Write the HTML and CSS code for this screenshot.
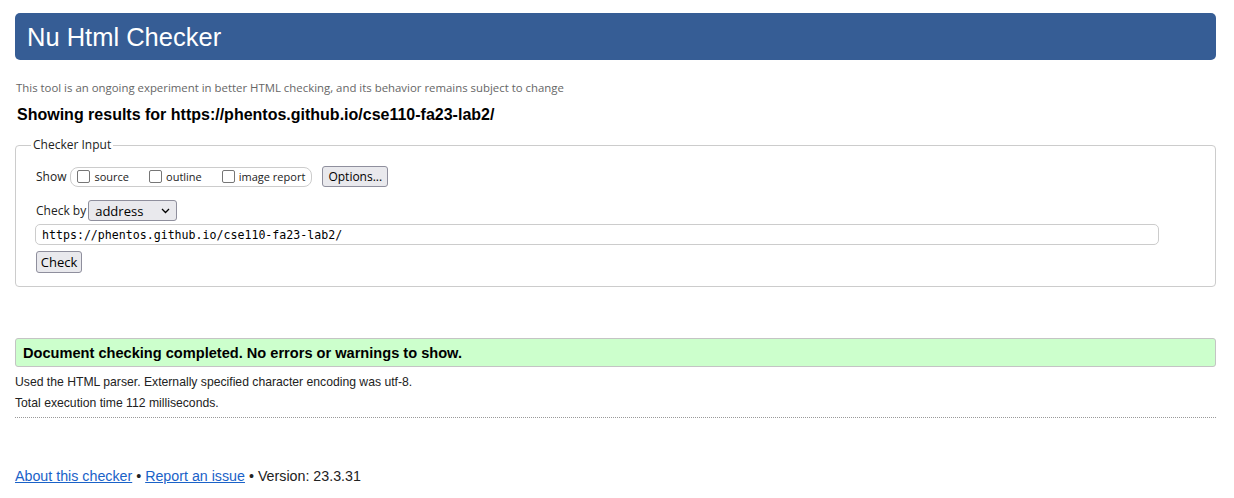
FILE: index.html
```html
<!DOCTYPE html>
<html lang="en">
<head>
<meta charset="utf-8">
<title>Nu Html Checker</title>
<link rel="stylesheet" href="styles.css">
</head>
<body>
<div class="page">
  <h1 class="banner">Nu Html Checker</h1>
  <p class="tagline">This tool is an ongoing experiment in better HTML checking, and its behavior remains subject to change</p>
  <h2 class="results-for">Showing results for https://phentos.github.io/cse110-fa23-lab2/</h2>
  <fieldset class="input-box">
    <legend class="legend">Checker Input</legend>
    <div class="show-row">
      <span class="label">Show</span>
      <span class="show-group">
        <label class="opt"><input type="checkbox" class="cb"><span>source</span></label>
        <label class="opt"><input type="checkbox" class="cb"><span>outline</span></label>
        <label class="opt"><input type="checkbox" class="cb"><span>image report</span></label>
      </span>
      <button class="btn btn-options" type="button">Options...</button>
    </div>
    <div class="by-row">
      <span class="label">Check by</span>
      <span class="select">address
        <svg class="chev" width="9" height="6" viewBox="0 0 9 6"><path d="M1 1l3.5 3.5L8 1" fill="none" stroke="#000" stroke-width="1.3"/></svg>
      </span>
    </div>
    <div class="url-row">
      <input class="url" type="text" value="https://phentos.github.io/cse110-fa23-lab2/">
    </div>
    <div class="check-row">
      <button class="btn btn-check" type="button">Check</button>
    </div>
  </fieldset>
  <p class="success">Document checking completed. No errors or warnings to show.</p>
  <p class="details">Used the HTML parser. Externally specified character encoding was utf-8.</p>
  <p class="details">Total execution time 112 milliseconds.</p>
  <hr class="sep">
  <p class="footer"><a href="#">About this checker</a> • <a href="#">Report an issue</a> • Version: 23.3.31</p>
</div>
</body>
</html>
```
FILE: styles.css
```css
html, body {
  margin: 0;
  padding: 0;
  background: #fff;
}
body {
  font-family: "Liberation Sans", Arial, sans-serif;
  color: #111;
}
.page {
  width: 1201px;
  margin-left: 15px;
  padding-top: 13px;
}
.banner {
  margin: 0;
  height: 47px;
  line-height: 48px;
  padding: 0 12px;
  background: #365d95;
  color: #fff;
  font-weight: normal;
  font-size: 25.5px;
  border-radius: 5px;
}
.tagline {
  margin: 21px 0 0 1px;
  font-family: "Open Sans", sans-serif;
  font-size: 11.4px;
  line-height: 14px;
  color: #666;
}
.results-for {
  margin: 10px 0 0 2px;
  font-size: 16px;
  line-height: 20px;
  font-weight: bold;
  color: #000;
}
.input-box {
  margin: 12px 0 0 0;
  padding: 0 20px 13px 20px;
  border: 1px solid #ccc;
  border-radius: 4px;
  font-family: "Open Sans", sans-serif;
  font-size: 12px;
  color: #222;
}
.legend {
  margin-left: -5px;
  padding: 0 2px;
  line-height: 16px;
}
.show-row {
  display: flex;
  align-items: center;
  margin-top: 13px;
  height: 21px;
}
.label {
  margin-right: 4px;
}
.show-group {
  display: flex;
  align-items: center;
  height: 18px;
  padding: 0 6px 0 6px;
  border: 1px solid #ccc;
  border-radius: 8px;
  gap: 20px;
  font-size: 11px;
}
.opt {
  display: flex;
  align-items: center;
}
.cb {
  appearance: none;
  width: 13px;
  height: 13px;
  margin: 0 4px 0 0;
  border: 1px solid #767676;
  border-radius: 2px;
  background: #fff;
  box-sizing: border-box;
}
.btn {
  font-family: "Open Sans", sans-serif;
  font-size: 12px;
  color: #000;
  background: #e9e9ed;
  border: 1px solid #8f8f9d;
  border-radius: 3px;
  padding: 0 5px;
  height: 21px;
  line-height: 18px;
}
.btn-options {
  margin-left: 10px;
  width: 66px;
}
.by-row {
  display: flex;
  align-items: center;
  margin-top: 13px;
  height: 21px;
}
.by-row .label {
  margin-right: 2px;
}
.select {
  display: flex;
  align-items: center;
  justify-content: space-between;
  box-sizing: border-box;
  width: 89px;
  height: 21px;
  padding: 0 6px 0 6px;
  border: 1px solid #8f8f9d;
  border-radius: 3px;
  background: #e9e9ed;
  font-size: 13px;
  color: #000;
}
.chev {
  display: block;
}
.url-row {
  margin-top: 3px;
}
.url {
  display: block;
  box-sizing: border-box;
  width: 1124px;
  height: 21px;
  margin-left: -1px;
  padding: 0 6px;
  border: 1px solid #ccc;
  border-radius: 5px;
  font-family: "DejaVu Sans Mono", monospace;
  font-size: 11.6px;
  color: #000;
}
.check-row {
  margin-top: 6px;
}
.btn-check {
  width: 46px;
  height: 22px;
  padding: 0;
  font-size: 13px;
}
.success {
  margin: 51px 0 0 0;
  height: 27px;
  line-height: 28px;
  padding: 0 7px;
  background: #ccffcc;
  border: 1px solid #c4c4c4;
  border-radius: 3px;
  font-size: 14.6px;
  font-weight: bold;
  color: #000;
}
.details {
  margin: 0;
  font-size: 12.2px;
  line-height: 21px;
  color: #222;
}
.success + .details {
  margin-top: 5px;
}
.sep {
  margin: 3px 0 0 0;
  border: 0;
  border-top: 1px dotted #999;
  height: 0;
}
.footer {
  margin: 49px 0 0 0;
  font-size: 14.25px;
  line-height: 18px;
  color: #222;
}
.footer a {
  color: #1a62c8;
  text-decoration: underline;
}
```
